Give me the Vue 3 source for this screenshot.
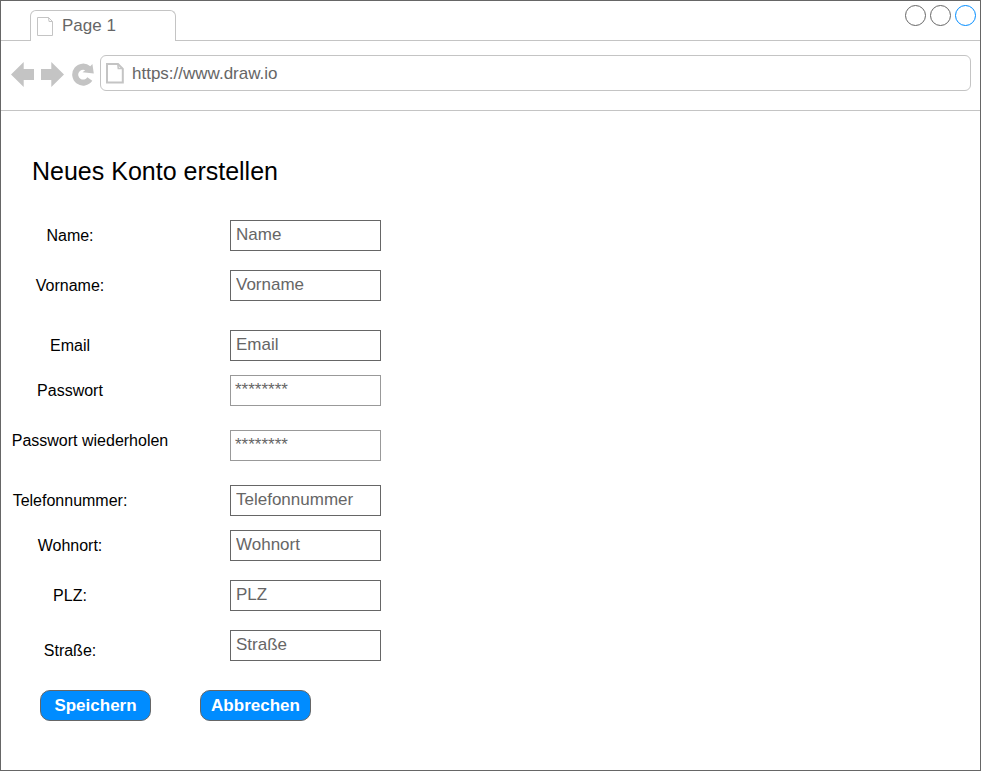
<script setup>
const fields = [
  { id: 'name', label: 'Name:', hint: 'Name' },
  { id: 'vorname', label: 'Vorname:', hint: 'Vorname' },
  { id: 'email', label: 'Email', hint: 'Email' },
  { id: 'passwort', label: 'Passwort', hint: '********', secret: true },
  { id: 'wiederholen', label: 'Passwort wiederholen', hint: '********', secret: true },
  { id: 'telefon', label: 'Telefonnummer:', hint: 'Telefonnummer' },
  { id: 'wohnort', label: 'Wohnort:', hint: 'Wohnort' },
  { id: 'plz', label: 'PLZ:', hint: 'PLZ' },
  { id: 'strasse', label: 'Straße:', hint: 'Straße' },
]
</script>

<template>
  <div class="window">
    <header class="tabs">
      <div class="tab">
        <svg class="tab-icon" width="18" height="21" viewBox="0 0 18 21">
          <path d="M1.500 1.500H12.500L16.500 5.500V19.500H1.500Z M12.500 1.500L13 5.500H16.500" />
        </svg>
        <span>Page 1</span>
      </div>
      <div class="controls">
        <span class="dot"></span>
        <span class="dot"></span>
        <span class="dot active"></span>
      </div>
    </header>

    <nav class="toolbar">
      <svg class="nav-icons" width="86" height="30" viewBox="0 0 86 30">
        <path d="M0 14.500L12.700 2V9H23V20H12.700V27Z" />
        <path d="M53 14.500L40.300 2V9H30V20H40.300V27Z" />
        <path
          d="M79.300 6.200L81.400 4L82.800 13.500L71.500 12.200L74.200 10.200A4.900 4.900 0 1 0 76.300 17.200L81.300 20.800A11 11 0 1 1 79.300 6.200Z"
        />
      </svg>
      <div class="address">
        <svg class="page-icon" width="20" height="22" viewBox="0 0 20 22">
          <path d="M2 2H13L17.800 6.800V20.500H2Z" />
          <path class="fold" d="M12.800 2L13.300 6.600H17.800" />
        </svg>
        <span>https://www.draw.io</span>
      </div>
    </nav>

    <main class="content">
      <h1>Neues Konto erstellen</h1>
      <form @submit.prevent>
        <div v-for="f in fields" :key="f.id" class="row" :class="f.id">
          <div class="label-cell">
            <label :for="f.id">{{ f.label }}</label>
          </div>
          <div class="field" :class="{ secret: f.secret }">
            <input :id="f.id" type="text" :placeholder="f.hint" />
          </div>
        </div>
        <div class="actions">
          <button type="submit">Speichern</button>
          <button type="button">Abbrechen</button>
        </div>
      </form>
    </main>
  </div>
</template>

<style>
body {
  background: #fff;
}
</style>

<style scoped>
.window {
  box-sizing: border-box;
  width: 981px;
  height: 771px;
  border: 1px solid #666;
  background: #fff;
  font-family: "Liberation Sans", Arial, sans-serif;
  color: #000;
  overflow: hidden;
}
.tabs {
  box-sizing: border-box;
  height: 40px;
  display: flex;
  justify-content: space-between;
  align-items: flex-start;
  padding: 9px 4px 0 29px;
  border-bottom: 1px solid #c4c4c4;
}
.tab {
  box-sizing: border-box;
  width: 146px;
  height: 31px;
  display: flex;
  padding: 5px 0 0 5px;
  gap: 8px;
  border: 1px solid #c4c4c4;
  border-bottom: 0;
  border-radius: 6px 6px 0 0;
  background: #fff;
  color: #666;
  font-size: 17px;
  line-height: 19px;
}
.tab-icon {
  fill: none;
  stroke: #c4c4c4;
  stroke-width: 1;
}
.controls {
  display: flex;
  gap: 4px;
  margin-top: -5px;
}
.dot {
  box-sizing: border-box;
  width: 21px;
  height: 21px;
  border: 1px solid #666;
  border-radius: 50%;
}
.dot.active {
  border-color: #008cff;
}
.toolbar {
  box-sizing: border-box;
  height: 70px;
  display: flex;
  align-items: flex-start;
  padding: 14px 9px 0 10px;
  border-bottom: 1px solid #c4c4c4;
}
.nav-icons {
  margin: 5px 3px 0 0;
  fill: #c4c4c4;
}
.address {
  box-sizing: border-box;
  flex: 1;
  height: 36px;
  display: flex;
  align-items: center;
  gap: 7px;
  padding-left: 4px;
  border: 1px solid #c4c4c4;
  border-radius: 6px;
  color: #666;
  font-size: 17px;
  line-height: 19px;
}
.page-icon {
  fill: none;
  stroke: #c4c4c4;
  stroke-width: 2;
}
.page-icon .fold {
  stroke-width: 1.5;
}
.content {
  padding-top: 46px;
}
h1 {
  margin: 0 0 35px 31px;
  font-size: 25px;
  line-height: 28px;
  font-weight: 400;
}
.row {
  display: flex;
  height: 31px;
}
.vorname,
.plz,
.strasse {
  margin-top: 19px;
}
.email {
  margin-top: 29px;
}
.passwort,
.wohnort {
  margin-top: 14px;
}
.wiederholen,
.telefon {
  margin-top: 24px;
}
.label-cell {
  width: 229px;
  padding-top: 7px;
}
label {
  display: block;
  width: 138px;
  text-align: center;
  font-size: 16px;
  line-height: 18px;
  white-space: nowrap;
}
.wiederholen label {
  width: 178px;
}
.wiederholen .label-cell {
  padding-top: 2px;
}
.strasse .label-cell {
  padding-top: 12px;
}
.field {
  box-sizing: border-box;
  width: 151px;
  height: 31px;
  padding: 4px 0 0 5px;
  border: 1px solid #666;
}
.field.secret {
  border-color: #999;
  padding-left: 4px;
}
input {
  display: block;
  width: 140px;
  height: 20px;
  margin: 0;
  padding: 0;
  border: 0;
  outline: 0;
  background: transparent;
  font: 17px/20px "Liberation Sans", Arial, sans-serif;
  color: #666;
}
input::placeholder {
  color: #666;
  opacity: 1;
}
.actions {
  display: flex;
  gap: 49px;
  padding: 29px 0 0 39px;
}
button {
  box-sizing: border-box;
  width: 111px;
  height: 31px;
  padding: 0;
  border: 1px solid #666;
  border-radius: 10px;
  background: #008cff;
  color: #fff;
  font: bold 17px/19px "Liberation Sans", Arial, sans-serif;
}
</style>
